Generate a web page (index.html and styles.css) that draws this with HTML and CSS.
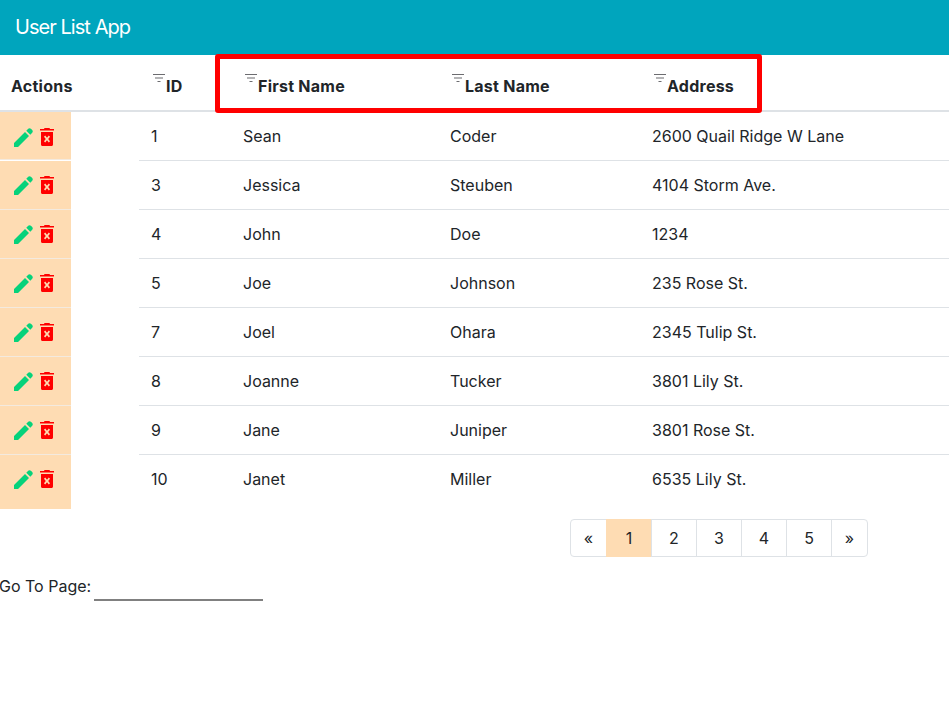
FILE: index.html
```html
<!DOCTYPE html>
<html lang="en">
<head>
    <meta charset="UTF-8">
    <title>User List App</title>
    <link rel="stylesheet" href="styles.css">
</head>
<body>
    <svg class="defs">
        <symbol id="filter" viewBox="0 0 12 10"><path d="M0 0h12v1H0zM2 3.500h8v1H2zM4.500 7h3v1h-3z"/></symbol>
        <symbol id="pencil" viewBox="0 0 19 19"><path d="M0 15l11-11 4 4L4 19H0zM12.300 2.700l1.900-1.900c.8-.8 1.900-.8 2.700 0l1.300 1.300c.8.8.8 1.900 0 2.700l-1.900 1.900z"/></symbol>
        <symbol id="trash" viewBox="0 0 14 18"><path fill-rule="evenodd" d="M4.500 0h5l.5 1h4v1.600H0V1h4zM1 4h12v12.500c0 .9-.6 1.500-1.500 1.500h-9C1.600 18 1 17.400 1 16.500zM5.200 7.600L4 8.800 5.800 11 4 13.200l1.200 1.200L7 12.300l1.800 2.100 1.200-1.200L8.200 11 10 8.800 8.800 7.600 7 9.700z"/></symbol>
    </svg>

    <nav class="navbar">User List App</nav>

    <div class="highlight"></div>

    <table class="users">
        <colgroup>
            <col class="col-actions">
            <col class="col-id">
            <col class="col-first">
            <col class="col-last">
            <col>
        </colgroup>
        <thead>
            <tr>
                <th class="actions-head">Actions</th>
                <th><svg class="filter"><use href="#filter"/></svg>ID</th>
                <th><svg class="filter"><use href="#filter"/></svg>First Name</th>
                <th><svg class="filter"><use href="#filter"/></svg>Last Name</th>
                <th><svg class="filter"><use href="#filter"/></svg>Address</th>
            </tr>
        </thead>
        <tbody>
            <tr>
                <td class="actions"><div class="action-cell"><svg class="pencil"><use href="#pencil"/></svg><svg class="trash"><use href="#trash"/></svg></div></td>
                <td>1</td><td>Sean</td><td>Coder</td><td>2600 Quail Ridge W Lane</td>
            </tr>
            <tr>
                <td class="actions"><div class="action-cell"><svg class="pencil"><use href="#pencil"/></svg><svg class="trash"><use href="#trash"/></svg></div></td>
                <td>3</td><td>Jessica</td><td>Steuben</td><td>4104 Storm Ave.</td>
            </tr>
            <tr>
                <td class="actions"><div class="action-cell"><svg class="pencil"><use href="#pencil"/></svg><svg class="trash"><use href="#trash"/></svg></div></td>
                <td>4</td><td>John</td><td>Doe</td><td>1234</td>
            </tr>
            <tr>
                <td class="actions"><div class="action-cell"><svg class="pencil"><use href="#pencil"/></svg><svg class="trash"><use href="#trash"/></svg></div></td>
                <td>5</td><td>Joe</td><td>Johnson</td><td>235 Rose St.</td>
            </tr>
            <tr>
                <td class="actions"><div class="action-cell"><svg class="pencil"><use href="#pencil"/></svg><svg class="trash"><use href="#trash"/></svg></div></td>
                <td>7</td><td>Joel</td><td>Ohara</td><td>2345 Tulip St.</td>
            </tr>
            <tr>
                <td class="actions"><div class="action-cell"><svg class="pencil"><use href="#pencil"/></svg><svg class="trash"><use href="#trash"/></svg></div></td>
                <td>8</td><td>Joanne</td><td>Tucker</td><td>3801 Lily St.</td>
            </tr>
            <tr>
                <td class="actions"><div class="action-cell"><svg class="pencil"><use href="#pencil"/></svg><svg class="trash"><use href="#trash"/></svg></div></td>
                <td>9</td><td>Jane</td><td>Juniper</td><td>3801 Rose St.</td>
            </tr>
            <tr>
                <td class="actions"><div class="action-cell last"><svg class="pencil"><use href="#pencil"/></svg><svg class="trash"><use href="#trash"/></svg></div></td>
                <td>10</td><td>Janet</td><td>Miller</td><td>6535 Lily St.</td>
            </tr>
        </tbody>
    </table>

    <ul class="pagination">
        <li class="page-edge">«</li>
        <li class="active">1</li>
        <li>2</li>
        <li>3</li>
        <li>4</li>
        <li>5</li>
        <li class="page-edge">»</li>
    </ul>

    <div class="goto">
        <label for="goto-page">Go To Page:</label>
        <input type="text" id="goto-page">
    </div>
</body>
</html>
```

FILE: styles.css
```css
body {
    margin: 0;
    position: relative;
    font-family: Inter, "Liberation Sans", sans-serif;
    font-size: 16px;
    line-height: 24px;
    color: #212529;
    background-color: #fff;
}
.defs {
    display: none;
}
.navbar {
    height: 55px;
    padding-left: 15px;
    line-height: 55px;
    font-size: 20px;
    letter-spacing: -0.95px;
    color: #fff;
    background-color: #00a5bd;
}
.highlight {
    position: absolute;
    left: 215px;
    top: 54px;
    width: 537px;
    height: 49px;
    border: 5px solid #f00;
    border-radius: 3px;
}
.users {
    width: 100%;
    table-layout: fixed;
    border-collapse: collapse;
}
.col-actions {
    width: 139px;
}
.col-id {
    width: 92px;
}
.col-first {
    width: 207px;
}
.col-last {
    width: 202px;
}
th, td {
    padding: 12px;
    text-align: left;
    vertical-align: top;
}
th {
    height: 56px;
    box-sizing: border-box;
    padding-top: 19px;
    padding-bottom: 0;
    font-weight: 700;
    letter-spacing: 0.25px;
    border-bottom: 2px solid #dee2e6;
}
.actions-head {
    padding-left: 11px;
}
td {
    border-top: 1px solid #dee2e6;
}
tbody tr:first-child td {
    border-top: none;
}
td.actions {
    padding: 0;
    border-top: none;
}
.action-cell {
    display: flex;
    gap: 7px;
    width: 71px;
    height: 49px;
    box-sizing: border-box;
    padding: 15px 0 0 14px;
    background-color: #fedcb3;
    border-bottom: 1px solid #f3eadf;
}
tbody tr:first-child .action-cell {
    height: 48px;
    padding-top: 16px;
}
.action-cell.last {
    height: 54px;
    border-bottom: none;
}
.pencil {
    width: 19px;
    height: 19px;
    fill: #06d27b;
}
.trash {
    width: 14px;
    height: 18px;
    fill: #f00;
}
.filter {
    width: 12px;
    height: 10px;
    margin: 0 1px 0 2px;
    vertical-align: 8px;
    fill: #6c6c70;
}
.pagination {
    display: flex;
    justify-content: flex-end;
    margin: 10px 81px 0 0;
    padding: 0;
    list-style: none;
}
.pagination li {
    box-sizing: border-box;
    width: 46px;
    height: 38px;
    margin-left: -1px;
    line-height: 36px;
    text-align: center;
    border: 1px solid #dee2e6;
}
.pagination .active {
    background-color: #fedcb3;
    border-color: #fedcb3;
}
.pagination .page-edge {
    width: 37px;
}
.pagination li:first-child {
    border-radius: 4px 0 0 4px;
}
.pagination li:last-child {
    border-radius: 0 4px 4px 0;
}
.goto {
    margin-top: 17px;
    display: flex;
    align-items: flex-start;
}
.goto label {
    margin-left: -1px;
}
.goto input {
    width: 169px;
    height: 27px;
    box-sizing: border-box;
    margin-left: 3px;
    padding: 0;
    border: none;
    border-bottom: 2px solid #808080;
    outline: none;
}
```
